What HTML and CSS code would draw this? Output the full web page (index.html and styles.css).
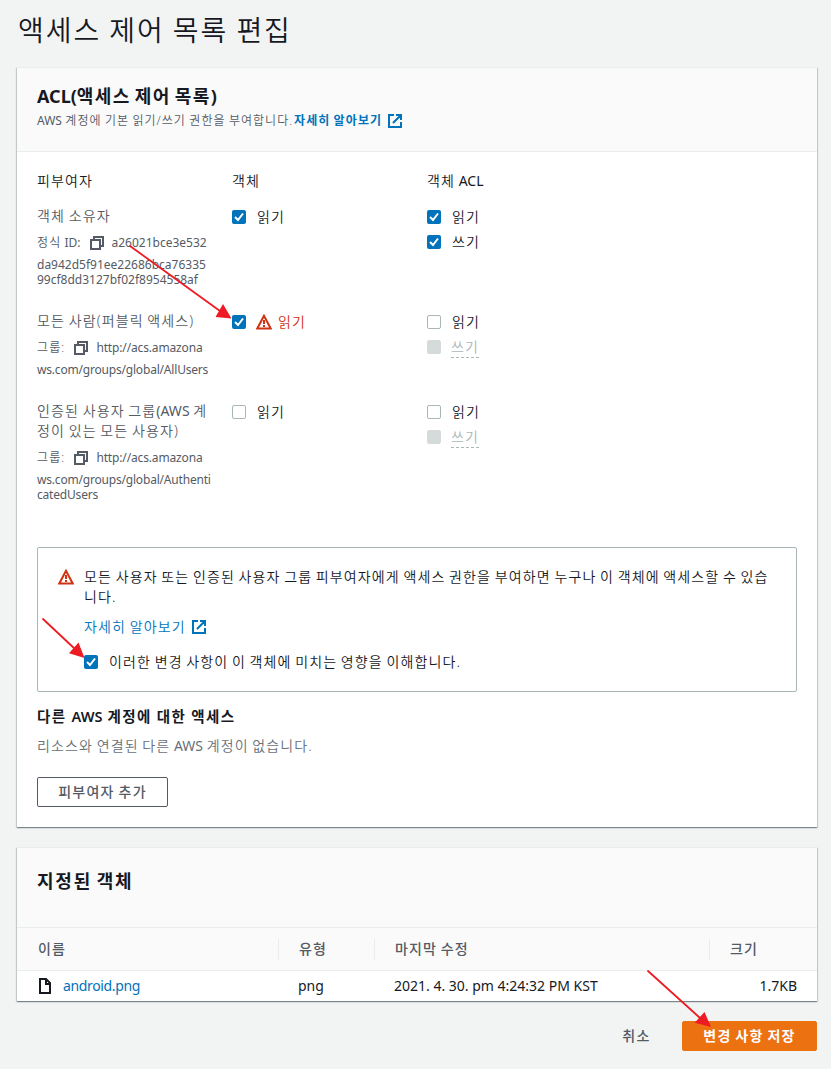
FILE: index.html
```html
<!DOCTYPE html>
<html lang="ko">
<head>
<meta charset="utf-8">
<title>액세스 제어 목록 편집</title>
<link rel="stylesheet" href="styles.css">
</head>
<body>
<svg class="defs" width="0" height="0">
  <symbol id="external" viewBox="0 0 16 16"><path d="M7 2H2v12h12V9M9 2h5v5M6 10l7-7"/></symbol>
  <symbol id="copy" viewBox="0 0 16 16"><path d="M2 5h9v9H2zM5 5V2h9v9h-3"/></symbol>
  <symbol id="warning" viewBox="0 0 16 16"><path d="M8 1.8 1.3 14.5h13.4z"/><path d="M8 6v4M8 11v2"/></symbol>
  <symbol id="file" viewBox="0 0 16 16"><path d="M3 1h6l4 4v10H3zM9 1v5h4"/></symbol>
  <symbol id="check" viewBox="0 0 14 14"><path d="M3 7l3 3 5-6.5"/></symbol>
</svg>
<main class="page">
  <h1 class="title">액세스 제어 목록 편집</h1>

  <section class="card acl">
    <header class="card-head">
      <h2><span class="latin">ACL(</span>액세스 제어 목록<span class="latin">)</span></h2>
      <p class="desc"><span class="desc-text"><span class="latin">AWS</span> 계정에 기본 읽기/쓰기 권한을 부여합니다.</span><a class="link strong">자세히 알아보기<svg class="icon"><use href="#external"/></svg></a></p>
    </header>
    <div class="card-body">
      <div class="grid heads"><span>피부여자</span><span>객체</span><span>객체 <span class="latin">ACL</span></span></div>

      <div class="grid owner">
        <div class="who">
          <div>객체 소유자</div>
          <div class="ident"><span>정식 <span class="latin">ID:</span></span><svg class="icon"><use href="#copy"/></svg><span class="latin">a26021bce3e532</span></div>
          <div class="rest latin">da942d5f91ee22686bca76335<br>99cf8dd3127bf02f8954558af</div>
        </div>
        <div class="perms">
          <label class="opt"><span class="box on"><svg><use href="#check"/></svg></span>읽기</label>
        </div>
        <div class="perms">
          <label class="opt"><span class="box on"><svg><use href="#check"/></svg></span>읽기</label>
          <label class="opt"><span class="box on"><svg><use href="#check"/></svg></span>쓰기</label>
        </div>
      </div>

      <div class="grid everyone">
        <div class="who">
          <div>모든 사람(퍼블릭 액세스)</div>
          <div class="ident"><span>그룹:</span><svg class="icon"><use href="#copy"/></svg><span class="latin url">http://acs.amazona</span></div>
          <div class="rest latin url">ws.com/groups/global/AllUsers</div>
        </div>
        <div class="perms">
          <label class="opt danger"><span class="box on"><svg><use href="#check"/></svg></span><svg class="icon"><use href="#warning"/></svg>읽기</label>
        </div>
        <div class="perms">
          <label class="opt"><span class="box"></span>읽기</label>
          <label class="opt off"><span class="box"></span><span class="hint">쓰기</span></label>
        </div>
      </div>

      <div class="grid authed">
        <div class="who">
          <div>인증된 사용자 그룹<span class="latin">(AWS</span> 계<br>정이 있는 모든 사용자)</div>
          <div class="ident"><span>그룹:</span><svg class="icon"><use href="#copy"/></svg><span class="latin url">http://acs.amazona</span></div>
          <div class="rest latin url">ws.com/groups/global/Authenti<br>catedUsers</div>
        </div>
        <div class="perms">
          <label class="opt"><span class="box"></span>읽기</label>
        </div>
        <div class="perms">
          <label class="opt"><span class="box"></span>읽기</label>
          <label class="opt off"><span class="box"></span><span class="hint">쓰기</span></label>
        </div>
      </div>

      <div class="alert">
        <svg class="icon alert-icon"><use href="#warning"/></svg>
        <div class="alert-text">
          <p>모든 사용자 또는 인증된 사용자 그룹 피부여자에게 액세스 권한을 부여하면 누구나 이 객체에 액세스할 수 있습<br>니다.</p>
          <a class="link">자세히 알아보기<svg class="icon"><use href="#external"/></svg></a>
          <label class="opt ack"><span class="box on"><svg><use href="#check"/></svg></span>이러한 변경 사항이 이 객체에 미치는 영향을 이해합니다.</label>
        </div>
      </div>

      <h3>다른 <span class="latin">AWS</span> 계정에 대한 액세스</h3>
      <p class="empty">리소스와 연결된 다른 <span class="latin">AWS</span> 계정이 없습니다.</p>
      <button class="btn">피부여자 추가</button>
    </div>
  </section>

  <section class="card objects">
    <header class="card-head"><h2>지정된 객체</h2></header>
    <div class="row row-head"><span>이름</span><span>유형</span><span>마지막 수정</span><span>크기</span></div>
    <div class="row row-data latin">
      <span class="name"><svg class="icon file"><use href="#file"/></svg><a class="link">android.png</a></span>
      <span>png</span><span>2021. 4. 30. pm 4:24:32 PM KST</span><span class="size">1.7KB</span>
    </div>
  </section>

  <footer class="actions">
    <button class="btn plain">취소</button>
    <button class="btn primary">변경 사항 저장</button>
  </footer>
</main>
<svg class="arrows" viewBox="0 0 831 1069">
  <path class="shaft" d="M130 246 220 311M43 619l32 30M648 971 700 1018"/>
  <path class="tip" d="M231.5 318.5 223 304 215.5 317zM84.5 658l-6-15.5L69 653.3zM711 1027l-6.5-15-9.8 10.7z"/>
</svg>
</body>
</html>
```

FILE: styles.css
```css
* { box-sizing: border-box; }
body {
  margin: 0;
  background: #f2f3f3;
  color: #16191f;
  font: 350 14px/20px "Noto Sans", "Noto Sans CJK KR", sans-serif;
  letter-spacing: .08em;
  word-spacing: -.08em;
}
h1, h2, h3, p { margin: 0; }
.defs { position: absolute; }
.latin { font-weight: 400; letter-spacing: 0; word-spacing: 0; }
h2 .latin, h3 .latin { font-weight: inherit; }
.page { position: relative; width: 831px; height: 1069px; padding: 10px 14px 0 17px; overflow: hidden; }
.title { height: 57px; padding-left: 1px; font-size: 28px; line-height: 40px; font-weight: 350; letter-spacing: .07em; white-space: nowrap; }

.icon { width: 16px; height: 16px; flex: none; fill: none; stroke: currentColor; stroke-width: 2; }
.link { display: flex; align-items: center; color: #0073bb; }
.link .icon { margin-left: 5px; }
.strong { font-weight: 700; }

.card {
  width: 800px;
  background: #fff;
  border-top: 1px solid #eaeded;
  box-shadow: 0 1px 1px rgba(0, 28, 36, .3), 1px 1px 1px rgba(0, 28, 36, .15), -1px 1px 1px rgba(0, 28, 36, .15);
}
.acl { height: 760px; }
.card-head { background: #fafafa; border-bottom: 1px solid #eaeded; padding: 17px 20px 0; }
.acl .card-head { height: 84px; }
h2 { font-size: 18px; line-height: 22px; font-weight: 700; letter-spacing: .075em; word-spacing: -.1em; white-space: nowrap; }
.objects h2 { letter-spacing: .1em; }
.desc { display: flex; align-items: center; gap: 4px; height: 18px; margin-top: 5px; font-size: 12px; color: #545b64; white-space: nowrap; }
.desc-text { width: 253px; letter-spacing: .085em; word-spacing: -.06em; }

.card-body { padding: 19px 20px 0; }
.grid { display: grid; grid-template-columns: 195px 195px 1fr; white-space: nowrap; }
.heads { height: 35px; }
.owner { height: 105px; }
.everyone { height: 90px; }
.authed { height: 146px; }
.who { color: #545b64; }
.ident { display: flex; align-items: center; height: 22px; margin-top: 6px; font-size: 12px; }
.ident .icon { margin: 0 7px 0 8px; }
.rest { margin-top: 3px; font-size: 12px; line-height: 15px; }
.url { letter-spacing: -.012em; }
.rest.url { letter-spacing: -.016em; }
.perms { display: flex; flex-direction: column; gap: 5px; padding-top: 1px; }
.opt { display: flex; align-items: center; height: 20px; }
.box { flex: none; width: 14px; height: 14px; margin-right: 11px; background: #fff; border: 1px solid #aab7b8; border-radius: 2px; }
.box.on { border: 0; background: #0073bb; }
.box svg { display: block; width: 14px; height: 14px; fill: none; stroke: #fff; stroke-width: 2; }
.danger { color: #d13212; }
.danger .box { margin-right: 10px; }
.danger .icon { margin-right: 6px; }
.off { color: #aab7b8; }
.off .box { margin-right: 10px; background: #d5dbdb; border-color: #d5dbdb; }
.hint { height: 21px; margin-top: 1px; border-bottom: 1px dashed #aab7b8; }

.alert { display: flex; height: 145px; padding: 19px 20px; border: 1px solid #aab7b8; border-radius: 2px; white-space: nowrap; }
.alert-icon { margin: 2px 10px 0 0; color: #d13212; }
.alert .link { margin-top: 10px; }
.ack { margin-top: 15px; }
h3 { margin-top: 14px; font-size: 14.5px; line-height: 20px; font-weight: 600; letter-spacing: .1em; word-spacing: -.02em; }
.empty { margin: 10px 0 21px; color: #687078; }

.btn { height: 30px; padding: 0 20px; background: #fff; border: 1px solid #545b64; border-radius: 2px; color: #545b64; font: inherit; font-weight: 500; line-height: 26px; letter-spacing: .09em; word-spacing: inherit; white-space: nowrap; width: 131px; }

.objects { height: 154px; margin-top: 20px; }
.objects .card-head { height: 80px; padding-top: 22px; }
.row { display: grid; grid-template-columns: 262px 96px 335px 1fr; align-items: center; }
.row-head { height: 43px; background: #fafafa; border-bottom: 1px solid #eaeded; color: #545b64; font-weight: 500; }
.row-head span { height: 21px; border-right: 1px solid #eaeded; padding-left: 20px; }
.row-head span:first-child { padding-left: 21px; }
.row-head span:last-child { border: 0; }
.row-data { height: 30px; }
.row-data > span { padding-left: 19px; }
.row-data .name { display: flex; align-items: center; padding-left: 20px; }
.name .link { letter-spacing: -.025em; }
.file { margin-right: 10px; color: #16191f; }
.row-data .size { padding-right: 20px; text-align: right; }

.actions { display: flex; justify-content: flex-end; height: 30px; margin-top: 20px; }
.plain { width: 91px; background: none; border-color: transparent; }
.primary { width: 135px; background: #ec7211; border-color: #ec7211; color: #fff; font-weight: 700; }

/* Annotation arrows drawn over the page */
.arrows { position: absolute; top: 0; left: 0; width: 831px; height: 1069px; pointer-events: none; }
.shaft { fill: none; stroke: #ed1c24; stroke-width: 1.8; stroke-linecap: round; }
.tip { fill: #ed1c24; }
```
